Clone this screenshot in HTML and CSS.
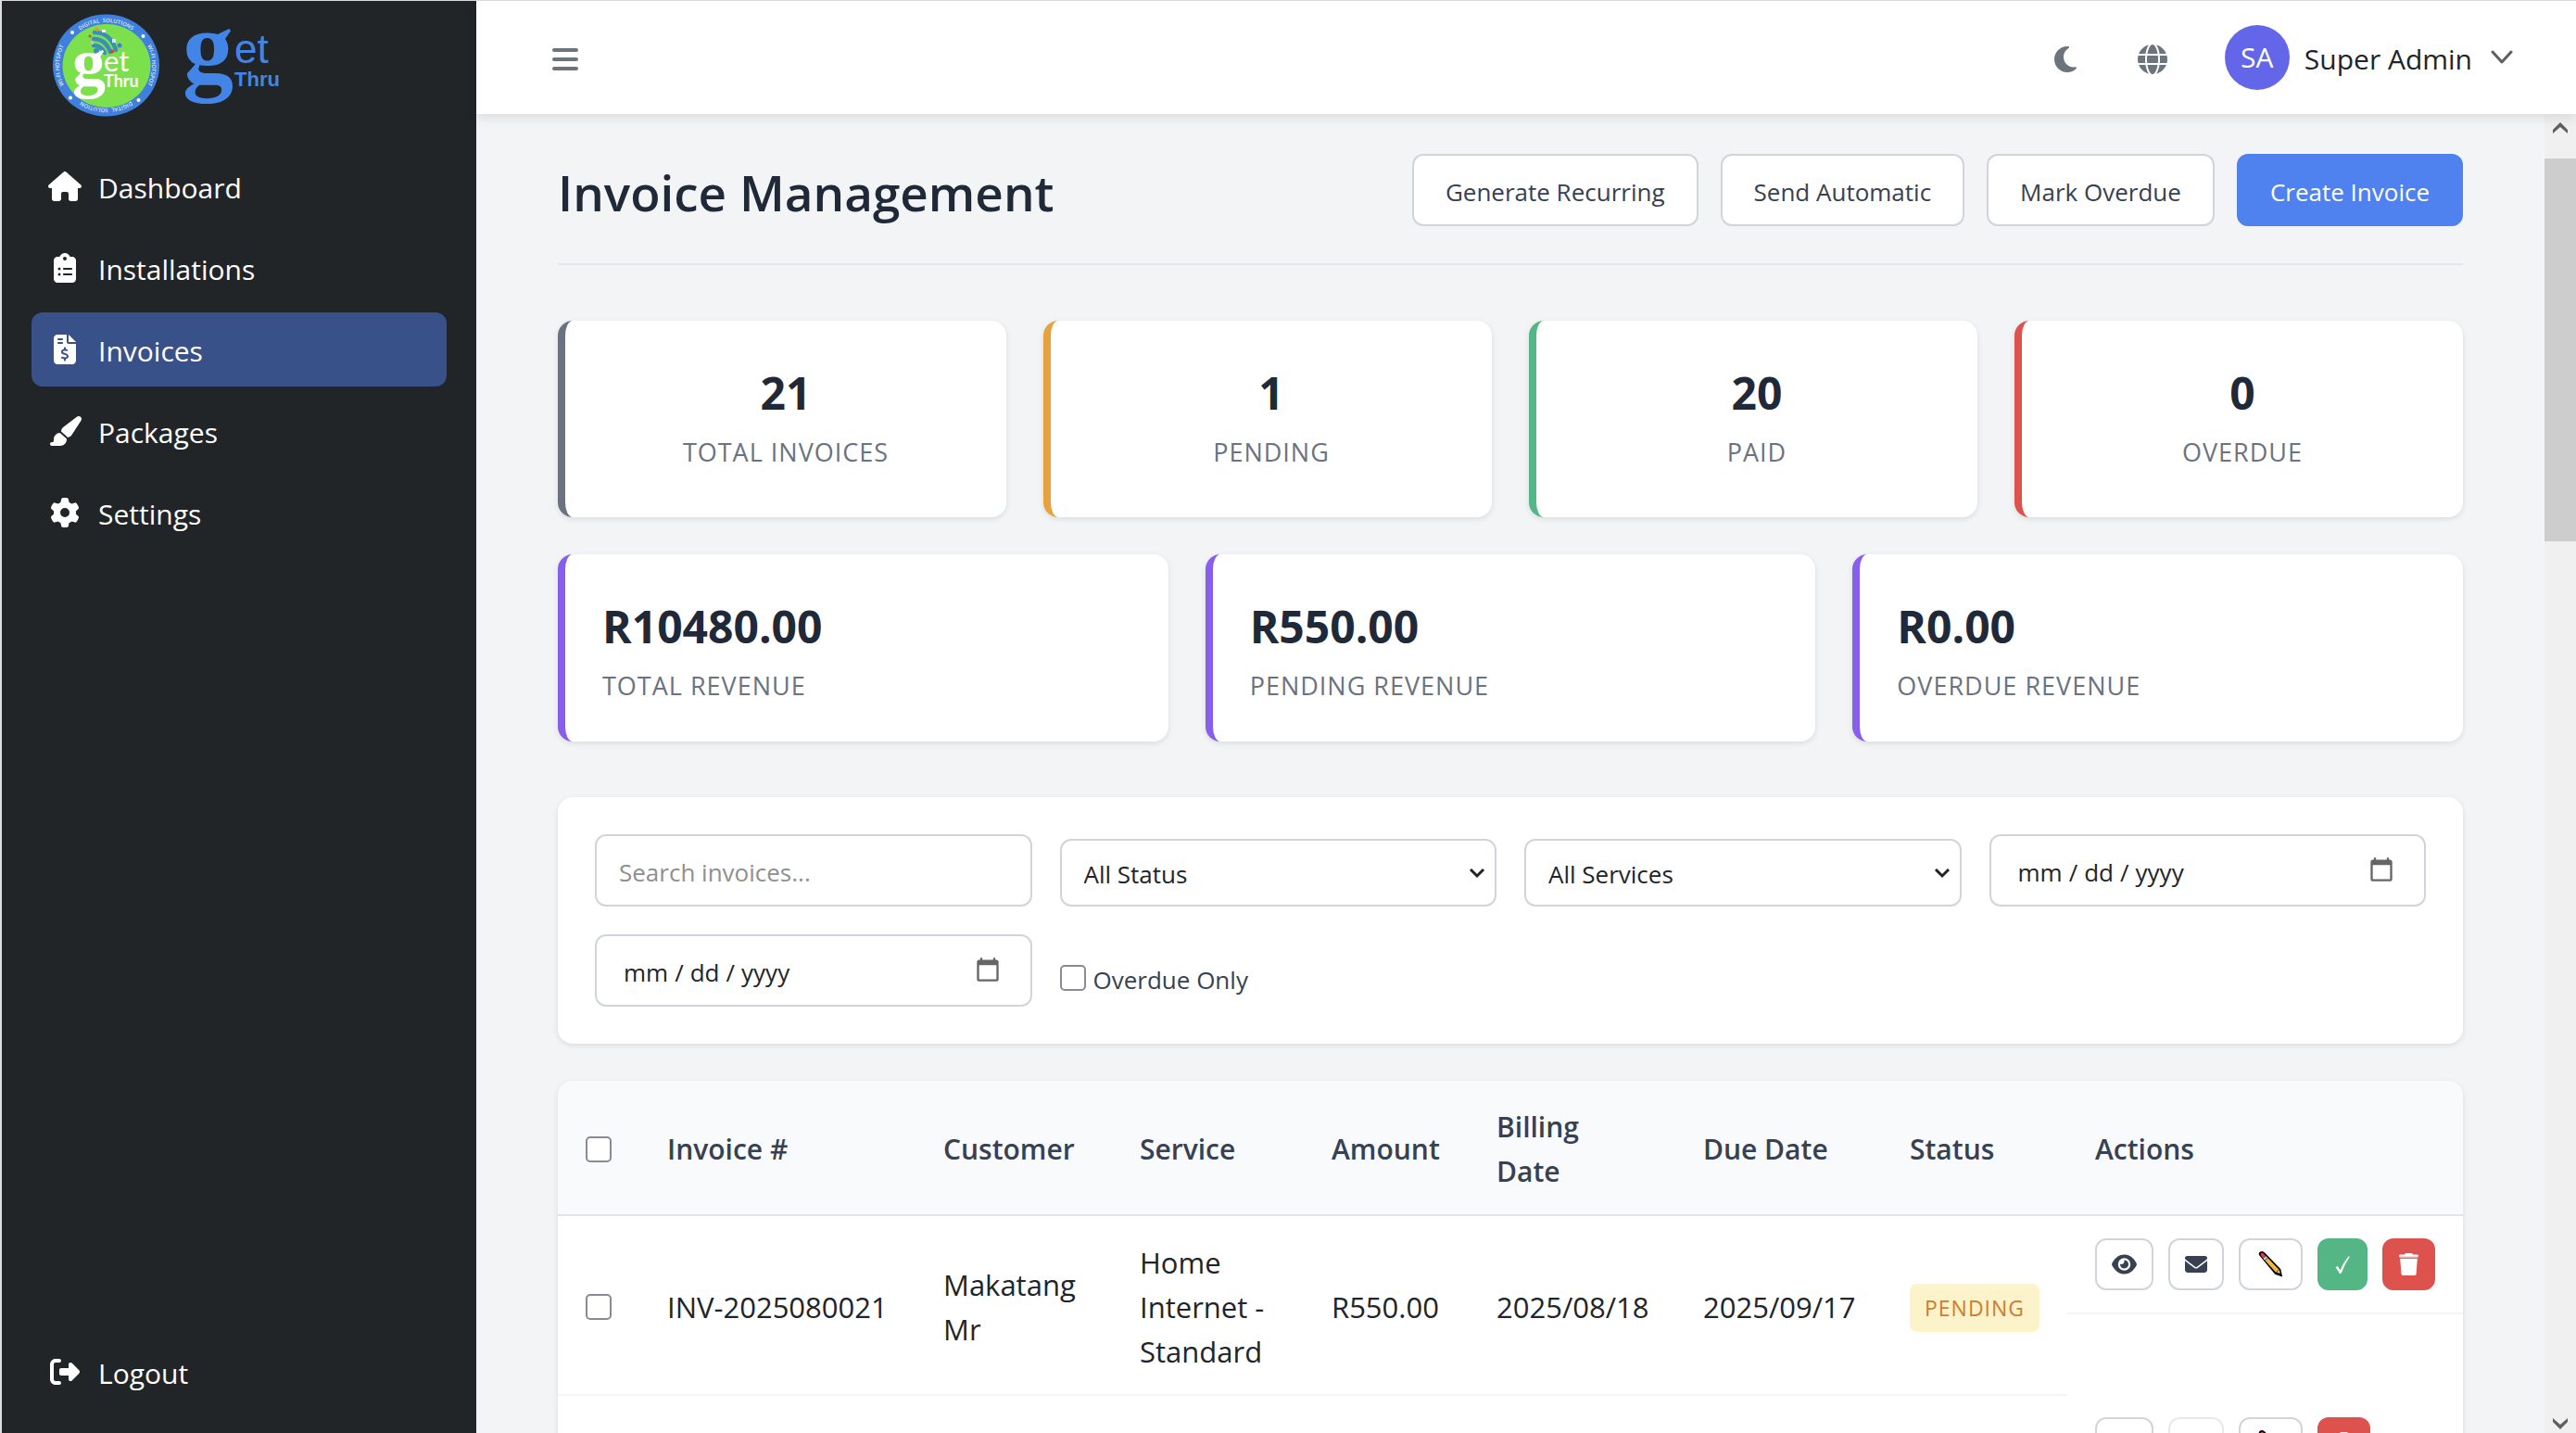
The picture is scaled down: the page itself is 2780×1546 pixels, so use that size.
FILE: index.html
```html
<!DOCTYPE html>
<html lang="en">
<head>
<meta charset="utf-8">
<title>Invoice Management</title>
<link rel="stylesheet" href="styles.css">
</head>
<body>
<svg class="sprite" aria-hidden="true">
  <symbol id="i-house" viewBox="0 0 576 512"><path d="M575.8 255.5c0 18-15 32.1-32 32.1l-32 0 .7 160.2c0 2.7-.2 5.4-.5 8.1l0 16.2c0 22.1-17.9 40-40 40l-16 0c-1.1 0-2.2 0-3.3-.1c-1.4 .1-2.8 .1-4.2 .1L416 512l-24 0c-22.1 0-40-17.9-40-40l0-24 0-64c0-17.7-14.3-32-32-32l-64 0c-17.7 0-32 14.3-32 32l0 64 0 24c0 22.1-17.9 40-40 40l-24 0-31.9 0c-1.5 0-3-.1-4.5-.2c-1.2 .1-2.4 .2-3.6 .2l-16 0c-22.1 0-40-17.9-40-40l0-112c0-.9 0-1.9 .1-2.8l0-69.7-32 0c-18 0-32-14-32-32.1c0-9 3-17 10-24L266.4 8c7-7 15-8 22-8s15 2 21 7L564.8 231.5c8 7 12 15 11 24z"/></symbol>
  <symbol id="i-clipboard" viewBox="0 0 384 512"><path d="M192 0c-41.8 0-77.4 26.7-90.5 64L64 64C28.7 64 0 92.7 0 128L0 448c0 35.3 28.7 64 64 64l256 0c35.3 0 64-28.7 64-64l0-320c0-35.3-28.7-64-64-64l-37.5 0C269.4 26.7 233.8 0 192 0zm0 64a32 32 0 1 1 0 64 32 32 0 1 1 0-64zM72 272a24 24 0 1 1 48 0 24 24 0 1 1 -48 0zm104-16l128 0c8.8 0 16 7.2 16 16s-7.2 16-16 16l-128 0c-8.8 0-16-7.2-16-16s7.2-16 16-16zM72 368a24 24 0 1 1 48 0 24 24 0 1 1 -48 0zm88 0c0-8.8 7.2-16 16-16l128 0c8.8 0 16 7.2 16 16s-7.2 16-16 16l-128 0c-8.8 0-16-7.2-16-16z"/></symbol>
  <symbol id="i-invoice" viewBox="0 0 384 512"><path d="M64 0C28.7 0 0 28.7 0 64L0 448c0 35.3 28.7 64 64 64l256 0c35.3 0 64-28.7 64-64l0-288-128 0c-17.7 0-32-14.3-32-32L224 0 64 0zM256 0l0 128 128 0L256 0zM64 80c0-8.8 7.2-16 16-16l64 0c8.8 0 16 7.2 16 16s-7.2 16-16 16L80 96c-8.8 0-16-7.2-16-16zm0 64c0-8.8 7.2-16 16-16l64 0c8.8 0 16 7.2 16 16s-7.2 16-16 16l-64 0c-8.8 0-16-7.2-16-16zm128 72c8.8 0 16 7.2 16 16l0 17.3c8.5 1.2 16.7 3.1 24.1 5.1c8.5 2.3 13.6 11 11.3 19.6s-11 13.6-19.6 11.3c-11.1-3-22-5.2-32.1-5.3c-8.4-.1-17.4 1.8-23.6 5.5c-5.7 3.4-8.1 7.3-8.1 12.8c0 3.7 1.3 6.5 7.3 10.1c6.9 4.1 16.6 7.1 29.2 10.9l.5 .1c11.3 3.4 25.3 7.6 36.3 14.6c12.1 7.6 22.4 19.7 22.7 38.2c.3 19.3-9.6 33.3-22.9 41.6c-7.7 4.8-16.4 7.6-25.1 9.1l0 17.1c0 8.8-7.2 16-16 16s-16-7.2-16-16l0-17.8c-11.2-2.1-21.7-5.7-30.9-8.9c-2.1-.7-4.2-1.4-6.2-2.1c-8.4-2.8-12.9-11.9-10.1-20.2s11.9-12.9 20.2-10.1c2.5 .8 4.8 1.6 7.1 2.4c13.6 4.6 24.6 8.4 36.3 8.7c9.1 .3 17.9-1.7 23.7-5.3c5.1-3.2 7.9-7.3 7.8-14c-.1-4.6-1.8-7.8-7.7-11.6c-6.8-4.3-16.5-7.4-29-11.2l-1.6-.5c-11-3.3-24.3-7.3-34.8-13.7c-12-7.2-22.6-18.9-22.7-37.3c-.1-19.4 10.8-32.8 23.8-40.5c7.5-4.4 15.8-7.2 24.1-8.7l0-17.3c0-8.8 7.2-16 16-16z"/></symbol>
  <symbol id="i-brush" viewBox="0 0 576 512"><path d="M339.3 367.1c27.3-3.9 51.9-19.4 67.2-42.9L568.2 74.1c12.6-19.5 9.4-45.3-7.6-61.2S517.7-4.4 499.1 9.6L262.4 187.2c-24 18-38.2 46.1-38.4 76.1L339.3 367.1zm-19.6 25.4l-116-104.4C143.9 290.3 96 339.6 96 400c0 3.9 .2 7.8 .6 11.6C98.4 429.1 86.4 448 68.8 448L64 448c-17.7 0-32 14.3-32 32s14.3 32 32 32l144 0c61.9 0 112-50.1 112-112c0-2.5-.1-5-.2-7.5z"/></symbol>
  <symbol id="i-gear" viewBox="0 0 512 512"><path d="M495.9 166.6c3.2 8.7 .5 18.4-6.4 24.6l-43.3 39.4c1.1 8.3 1.7 16.8 1.7 25.4s-.6 17.1-1.7 25.4l43.3 39.4c6.9 6.2 9.6 15.9 6.4 24.6c-4.4 11.9-9.7 23.3-15.8 34.3l-4.7 8.1c-6.6 11-14 21.4-22.1 31.2c-5.9 7.2-15.7 9.6-24.5 6.8l-55.7-17.7c-13.4 10.3-28.2 18.9-44 25.4l-12.5 57.1c-2 9.1-9 16.3-18.2 17.8c-13.8 2.3-28 3.5-42.5 3.5s-28.7-1.2-42.5-3.5c-9.2-1.5-16.2-8.7-18.2-17.8l-12.5-57.1c-15.8-6.5-30.6-15.1-44-25.4L83.1 425.9c-8.8 2.8-18.6 .3-24.5-6.8c-8.1-9.8-15.5-20.2-22.1-31.2l-4.7-8.1c-6.1-11-11.4-22.4-15.8-34.3c-3.2-8.7-.5-18.4 6.4-24.6l43.3-39.4C64.6 273.1 64 264.6 64 256s.6-17.1 1.7-25.4L22.4 191.2c-6.9-6.2-9.6-15.9-6.4-24.6c4.4-11.9 9.7-23.3 15.8-34.3l4.7-8.1c6.6-11 14-21.4 22.1-31.2c5.9-7.2 15.7-9.6 24.5-6.8l55.7 17.7c13.4-10.3 28.2-18.9 44-25.4l12.5-57.1c2-9.1 9-16.3 18.2-17.8C227.3 1.2 241.5 0 256 0s28.7 1.2 42.5 3.5c9.2 1.5 16.2 8.7 18.2 17.8l12.5 57.1c15.8 6.5 30.6 15.1 44 25.4l55.7-17.7c8.8-2.8 18.6-.3 24.5 6.8c8.1 9.8 15.5 20.2 22.1 31.2l4.7 8.1c6.1 11 11.4 22.4 15.8 34.3zM256 336a80 80 0 1 0 0-160 80 80 0 1 0 0 160z"/></symbol>
  <symbol id="i-logout" viewBox="0 0 512 512"><path d="M377.9 105.9L500.7 228.7c7.2 7.2 11.3 17.1 11.3 27.3s-4.1 20.1-11.3 27.3L377.9 406.1c-6.4 6.4-15 9.9-24 9.9c-18.7 0-33.9-15.2-33.9-33.9l0-62.1-128 0c-17.7 0-32-14.3-32-32l0-64c0-17.7 14.3-32 32-32l128 0 0-62.1c0-18.7 15.2-33.9 33.9-33.9c9 0 17.6 3.6 24 9.9zM160 96L96 96c-17.7 0-32 14.3-32 32l0 256c0 17.7 14.3 32 32 32l64 0c17.7 0 32 14.3 32 32s-14.3 32-32 32l-64 0c-53 0-96-43-96-96L0 128C0 75 43 32 96 32l64 0c17.7 0 32 14.3 32 32s-14.3 32-32 32z"/></symbol>
  <symbol id="i-bars" viewBox="0 0 28 32"><path d="M2 4h24a2 2 0 0 1 0 4H2a2 2 0 0 1 0-4zm0 10h24a2 2 0 0 1 0 4H2a2 2 0 0 1 0-4zm0 10h24a2 2 0 0 1 0 4H2a2 2 0 0 1 0-4z"/></symbol>
  <symbol id="i-moon" viewBox="0 0 384 512"><path d="M223.5 32C100 32 0 132.3 0 256S100 480 223.5 480c60.6 0 115.5-24.2 155.8-63.4c5-4.9 6.3-12.5 3.1-18.7s-10.1-9.7-17-8.5c-9.8 1.7-19.8 2.6-30.1 2.6c-96.9 0-175.5-78.8-175.5-176c0-65.8 36-123.1 89.3-153.3c6.1-3.5 9.2-10.5 7.7-17.3s-7.3-11.9-14.3-12.5c-6.3-.5-12.6-.8-19-.8z"/></symbol>
  <symbol id="i-globe" viewBox="0 0 512 512"><path d="M352 256c0 22.2-1.2 43.6-3.3 64l-185.3 0c-2.2-20.4-3.3-41.8-3.3-64s1.2-43.6 3.3-64l185.3 0c2.2 20.4 3.3 41.8 3.3 64zm28.8-64l123.1 0c5.3 20.5 8.1 41.9 8.1 64s-2.8 43.5-8.1 64l-123.1 0c2.1-20.6 3.2-42 3.2-64s-1.1-43.4-3.2-64zm112.6-32l-116.7 0c-10-63.9-29.8-117.4-55.3-151.6c78.3 20.7 142 77.5 171.9 151.6zm-149.1 0l-176.6 0c6.1-36.4 15.5-68.6 27-94.7c10.5-23.6 22.2-40.7 33.5-51.5C239.4 3.2 248.7 0 256 0s16.6 3.2 27.8 13.8c11.3 10.8 23 27.9 33.5 51.5c11.6 26 20.9 58.2 27 94.7zm-209 0L18.6 160C48.6 85.9 112.2 29.1 190.6 8.4C165.1 42.6 145.3 96.1 135.3 160zM8.1 192l123.1 0c-2.1 20.6-3.2 42-3.2 64s1.1 43.4 3.2 64L8.1 320C2.8 299.5 0 278.1 0 256s2.8-43.5 8.1-64zM194.7 446.6c-11.6-26-20.9-58.2-27-94.6l176.6 0c-6.1 36.4-15.5 68.6-27 94.6c-10.5 23.6-22.2 40.7-33.5 51.5C272.6 508.8 263.3 512 256 512s-16.6-3.2-27.8-13.8c-11.3-10.8-23-27.9-33.5-51.5zM135.3 352c10 63.9 29.8 117.4 55.3 151.6C112.2 482.9 48.6 426.1 18.6 352l116.7 0zm358.1 0c-30 74.1-93.6 130.9-171.9 151.6c25.5-34.2 45.2-87.7 55.3-151.6l116.7 0z"/></symbol>
  <symbol id="i-eye" viewBox="0 0 576 512"><path d="M288 32c-80.8 0-145.5 36.8-192.6 80.6C48.6 156 17.3 208 2.5 243.7c-3.3 7.9-3.3 16.7 0 24.6C17.3 304 48.6 356 95.4 399.4C142.5 443.2 207.2 480 288 480s145.5-36.8 192.6-80.6c46.8-43.5 78.1-95.4 93-131.1c3.3-7.9 3.3-16.7 0-24.6c-14.9-35.7-46.2-87.7-93-131.1C433.5 68.8 368.8 32 288 32zM144 256a144 144 0 1 1 288 0 144 144 0 1 1 -288 0zm144-64c0 35.3-28.7 64-64 64c-7.1 0-13.9-1.2-20.3-3.3c-5.5-1.8-11.9 1.6-11.7 7.4c.3 6.9 1.3 13.8 3.2 20.7c13.7 51.2 66.4 81.6 117.6 67.9s81.6-66.4 67.9-117.6c-11.1-41.5-47.8-69.4-88.6-71.1c-5.8-.2-9.2 6.1-7.4 11.7c2.1 6.4 3.3 13.2 3.3 20.3z"/></symbol>
  <symbol id="i-mail" viewBox="0 0 512 512"><path d="M48 64C21.5 64 0 85.5 0 112c0 15.1 7.1 29.3 19.2 38.4L236.8 313.6c11.4 8.5 27 8.5 38.4 0L492.8 150.4c12.1-9.1 19.2-23.3 19.2-38.4c0-26.5-21.5-48-48-48L48 64zM0 176L0 384c0 35.3 28.7 64 64 64l384 0c35.3 0 64-28.7 64-64l0-208L294.4 339.2c-22.8 17.1-54 17.1-76.8 0L0 176z"/></symbol>
  <symbol id="i-pencil" viewBox="0 0 32 32">
    <path d="M3.500 6.500Q1 3 4 1.500Q7 0 9.500 3L27.500 21.500L29.500 30.500L21 27.500Z" fill="#000"/>
    <path d="M5 6Q3.500 4 5 3.200Q6.800 2.500 8.500 4.500L10 6L7 9Z" fill="#d9405a"/>
    <path d="M10.400 6.400L12.400 8.400L9.200 11.400L7.200 9.400Z" fill="#c9c9c9"/>
    <path d="M12.800 8.800L25.500 22L22 25.200L9.600 11.800Z" fill="#f5b73c"/>
    <path d="M25.800 22.500L27 26.500L23 25.600Z" fill="#e8cdb0"/>
  </symbol>
  <symbol id="i-check" viewBox="0 0 18 24"><path d="M1.500 15.500L3.500 13.800Q5.300 16 6.500 18.600Q9.500 10.500 15.600 3.200L16.800 4.100Q11.500 11.500 7.800 21.500L6 22.200Q4.300 18.500 1.500 15.500Z"/></symbol>
  <symbol id="i-trash" viewBox="0 0 448 512"><path d="M135 18L128 32H24Q0 34 0 60V80H448V60Q448 34 424 32H320L313 18Q307 0 284 0H164Q141 0 135 18Z"/><path opacity=".55" d="M14 80H434V112H14Z"/><path d="M26 128H422L396 482Q393 512 362 512H86Q55 512 52 482Z"/></symbol>
  <symbol id="i-chevron" viewBox="0 0 24 16"><path d="M2 2L12 13L22 2" fill="none" stroke="currentColor" stroke-width="3" stroke-linecap="round" stroke-linejoin="round"/></symbol>
  <symbol id="i-arrow" viewBox="0 0 18 16"><path d="M1 13V9L9 1L17 9V13L9 6Z"/></symbol>
</svg>

<div class="app">
  <aside class="sidebar">
    <a class="brand" href="#" aria-label="getThru home">
      <svg class="brand-logo" viewBox="52 12 252 116">
        <defs>
          <path id="ring-top" d="M66 70.500a48.500 46.500 0 0 1 97 0"/>
          <path id="ring-right" d="M114 22.500a49 47 0 0 1 0 96"/>
          <path id="ring-bottom" d="M163 70.500a48.500 46.500 0 0 1 -97 0"/>
          <path id="ring-left" d="M114 118.500a49 47 0 0 1 0 -96"/>
        </defs>
        <ellipse cx="114.500" cy="70.500" rx="57.500" ry="55" fill="#3f80df"/>
        <ellipse cx="115" cy="71" rx="47.500" ry="45" fill="#7be04b"/>
        <g class="ring-text">
          <text><textPath href="#ring-top" startOffset="50%">DIGITAL&#160;&#160;SOLUTIONS</textPath></text>
          <text><textPath href="#ring-right" startOffset="50%">WI-FI HOTSPOT</textPath></text>
          <text><textPath href="#ring-bottom" startOffset="50%">DIGITAL&#160;&#160;SOLUTION</textPath></text>
          <text><textPath href="#ring-left" startOffset="50%">WI-FI HOTSPOT</textPath></text>
        </g>
        <g fill="#fff"><circle cx="78" cy="35" r="2"/><circle cx="154.500" cy="39" r="2"/><circle cx="76" cy="105.500" r="2"/><circle cx="149.500" cy="108" r="2"/></g>
        <g fill="none" stroke="#3a8fb8" stroke-width="4.500" stroke-linecap="round">
          <path d="M102 35q17 0 23 19"/><path d="M101 42q13 0 18 14"/><path d="M101 49q8 0 12 8"/>
        </g>
        <circle cx="104" cy="55" r="3" fill="#3a8fb8"/><circle cx="129" cy="49" r="2.500" fill="#3f80df"/>
        <circle cx="104.500" cy="32" r="2" fill="#f08a3c"/><circle cx="121" cy="55.500" r="2" fill="#d93b3b"/><circle cx="97" cy="39" r="1.500" fill="#c04a3a"/>
        <rect x="110" y="32" width="4" height="3" fill="#fff"/><rect x="121" y="42" width="4" height="4" fill="#dfe8dc"/><rect x="98" y="44" width="3" height="4" fill="#b8c8b0"/>
        <g fill="#fff">
          <text class="logo-g" x="78" y="92" font-size="72">g</text>
          <text class="logo-et" x="112" y="77" font-size="31">et</text>
          <text class="logo-thru" x="112" y="94" font-size="18">Thru</text>
        </g>
        <g fill="#4385e6">
          <text class="logo-g" x="197" y="88" font-size="110">g</text>
          <text class="logo-word" x="253" y="68" font-size="44">et</text>
          <text class="logo-word logo-bold" x="253" y="93" font-size="22">Thru</text>
        </g>
      </svg>
    </a>
    <nav class="nav">
      <a class="nav-link" href="#"><svg class="nav-icon"><use href="#i-house"/></svg><span class="label">Dashboard</span></a>
      <a class="nav-link" href="#"><svg class="nav-icon"><use href="#i-clipboard"/></svg><span class="label">Installations</span></a>
      <a class="nav-link active" href="#" aria-current="page"><svg class="nav-icon"><use href="#i-invoice"/></svg><span class="label">Invoices</span></a>
      <a class="nav-link" href="#"><svg class="nav-icon"><use href="#i-brush"/></svg><span class="label">Packages</span></a>
      <a class="nav-link" href="#"><svg class="nav-icon"><use href="#i-gear"/></svg><span class="label">Settings</span></a>
      <a class="nav-link logout" href="#"><svg class="nav-icon"><use href="#i-logout"/></svg><span class="label">Logout</span></a>
    </nav>
  </aside>

  <div class="shell">
    <header class="topbar">
      <button class="icon-button" type="button" aria-label="Toggle menu"><svg class="icon-bars"><use href="#i-bars"/></svg></button>
      <div class="topbar-tools">
        <button class="icon-button" type="button" aria-label="Dark mode"><svg class="icon-tool"><use href="#i-moon"/></svg></button>
        <button class="icon-button" type="button" aria-label="Language"><svg class="icon-tool"><use href="#i-globe"/></svg></button>
        <button class="user" type="button"><span class="avatar">SA</span><span class="label">Super Admin</span><svg class="user-chevron"><use href="#i-chevron"/></svg></button>
      </div>
    </header>

    <div class="viewport">
      <main class="content">
        <div class="page-head">
          <h1>Invoice Management</h1>
          <div class="page-actions">
            <button class="btn" type="button">Generate Recurring</button>
            <button class="btn" type="button">Send Automatic</button>
            <button class="btn" type="button">Mark Overdue</button>
            <button class="btn primary" type="button">Create Invoice</button>
          </div>
        </div>

        <section class="stats" aria-label="Invoice counts">
          <div class="card stat total"><div class="figure">21</div><div class="caption">Total Invoices</div></div>
          <div class="card stat pending"><div class="figure">1</div><div class="caption">Pending</div></div>
          <div class="card stat paid"><div class="figure">20</div><div class="caption">Paid</div></div>
          <div class="card stat overdue"><div class="figure">0</div><div class="caption">Overdue</div></div>
        </section>

        <section class="revenue" aria-label="Revenue">
          <div class="card sum"><div class="figure">R10480.00</div><div class="caption">Total Revenue</div></div>
          <div class="card sum"><div class="figure">R550.00</div><div class="caption">Pending Revenue</div></div>
          <div class="card sum"><div class="figure">R0.00</div><div class="caption">Overdue Revenue</div></div>
        </section>

        <form class="card filters">
          <input class="field" type="text" placeholder="Search invoices..." aria-label="Search invoices">
          <select class="field select" aria-label="Status"><option>All Status</option></select>
          <select class="field select" aria-label="Service"><option>All Services</option></select>
          <input class="field" type="date" aria-label="From date">
          <input class="field" type="date" aria-label="To date">
          <label class="check-label"><input class="check" type="checkbox"><span class="label">Overdue Only</span></label>
        </form>

        <div class="card table-card">
          <table class="invoices">
            <colgroup><col class="c-check"><col class="c-invoice"><col class="c-customer"><col class="c-service"><col class="c-amount"><col class="c-date"><col class="c-date"><col class="c-status"><col class="c-actions"></colgroup>
            <thead>
              <tr><th><input class="check" type="checkbox" aria-label="Select all invoices"></th><th>Invoice #</th><th>Customer</th><th>Service</th><th>Amount</th><th>Billing Date</th><th>Due Date</th><th>Status</th><th>Actions</th></tr>
            </thead>
            <tbody>
              <tr>
                <td><input class="check" type="checkbox" aria-label="Select INV-2025080021"></td>
                <td>INV-2025080021</td><td>Makatang Mr</td><td>Home Internet - Standard</td><td>R550.00</td><td>2025/08/18</td><td>2025/09/17</td>
                <td><span class="badge">Pending</span></td>
                <td class="actions-cell"><div class="actions">
                  <button class="act" type="button" aria-label="View"><svg class="act-eye"><use href="#i-eye"/></svg></button>
                  <button class="act" type="button" aria-label="Email"><svg class="act-mail"><use href="#i-mail"/></svg></button>
                  <button class="act" type="button" aria-label="Edit"><svg class="act-pencil"><use href="#i-pencil"/></svg></button>
                  <button class="act success" type="button" aria-label="Mark paid"><svg class="act-check"><use href="#i-check"/></svg></button>
                  <button class="act danger" type="button" aria-label="Delete"><svg class="act-trash"><use href="#i-trash"/></svg></button>
                </div></td>
              </tr>
              <tr>
                <td><input class="check" type="checkbox" aria-label="Select invoice"></td>
                <td></td><td></td><td>Home Internet - Standard</td><td></td><td></td><td></td><td></td>
                <td class="actions-cell"><div class="actions">
                  <button class="act" type="button" aria-label="View"><svg class="act-eye"><use href="#i-eye"/></svg></button>
                  <button class="act" type="button" aria-label="Email" disabled><svg class="act-mail"><use href="#i-mail"/></svg></button>
                  <button class="act" type="button" aria-label="Edit"><svg class="act-pencil"><use href="#i-pencil"/></svg></button>
                  <button class="act danger" type="button" aria-label="Delete"><svg class="act-trash"><use href="#i-trash"/></svg></button>
                </div></td>
              </tr>
            </tbody>
          </table>
        </div>
      </main>
      <div class="scrollbar" aria-hidden="true">
        <svg class="scroll-arrow"><use href="#i-arrow"/></svg>
        <div class="scroll-thumb"></div>
        <svg class="scroll-arrow down"><use href="#i-arrow"/></svg>
      </div>
    </div>
  </div>
</div>
</body>
</html>
```
FILE: styles.css
```css
* { box-sizing: border-box; }

body {
  margin: 0;
  background: #f3f4f6;
  color: #212529;
  font-family: "Open Sans", "Noto Sans", sans-serif;
  font-size: 30px;
  line-height: 48px;
}

button, input, select { font: inherit; color: inherit; }
button { cursor: pointer; }
svg { display: block; fill: currentColor; }
.sprite { position: absolute; width: 0; height: 0; }
.label { padding-top: 4px; }

.app {
  display: flex;
  height: 100vh;
  overflow: hidden;
  border-top: 1px solid #d9dadb;
  border-left: 2px solid #dcdddd;
}

/* Sidebar */
.sidebar {
  display: flex;
  flex-direction: column;
  flex: none;
  width: 512px;
  background: #212528;
  color: #fff;
}
.brand { display: block; padding: 11px 50px 33px; }
.brand-logo { width: 252px; height: 116px; }
.ring-text text {
  font: 600 6px "Open Sans", sans-serif;
  fill: #dce8fb;
  text-anchor: middle;
}
.logo-g { font-family: "Liberation Serif", serif; font-weight: 700; }
.logo-et { font-family: Lato, sans-serif; }
.logo-thru { font-family: Lato, sans-serif; font-weight: 700; }
.logo-word { font-family: "Liberation Sans", sans-serif; }
.logo-bold { font-weight: 700; }

.nav {
  display: flex;
  flex: 1;
  flex-direction: column;
  gap: 8px;
  padding: 0 32px 26px;
}
.nav-link {
  display: flex;
  align-items: center;
  gap: 18px;
  height: 80px;
  padding: 0 18px;
  border-radius: 12px;
  color: #fff;
  text-decoration: none;
}
.nav-link.active { background: #385289; }
.nav-icon { width: 36px; height: 32px; }
.logout { margin-top: auto; }

/* Top bar */
.shell { display: flex; flex: 1; flex-direction: column; min-width: 0; }
.topbar {
  display: flex;
  flex: none;
  align-items: center;
  justify-content: space-between;
  position: relative;
  z-index: 1;
  height: 122px;
  padding: 0 68px 0 82px;
  background: #fff;
  box-shadow: 0 4px 12px rgba(0, 0, 0, .1);
}
.topbar-tools { display: flex; align-items: center; gap: 62px; }
.icon-button {
  padding: 4px 0 0;
  border: 0;
  background: none;
  color: #6c757d;
}
.icon-bars { width: 28px; height: 32px; }
.icon-tool { width: 32px; height: 32px; }
.user {
  display: flex;
  align-items: center;
  gap: 16px;
  padding: 0;
  border: 0;
  background: none;
}
.avatar {
  width: 70px;
  height: 70px;
  border-radius: 50%;
  background: #6366e8;
  color: #fff;
  line-height: 70px;
  text-align: center;
}
.user-chevron { width: 24px; height: 16px; margin-left: 4px; color: #5c5f63; }

/* Page */
.viewport { display: flex; flex: 1; min-height: 0; }
.content {
  flex: 1;
  min-width: 0;
  padding: 43px 88px 0;
  overflow: hidden;
}
.page-head {
  display: flex;
  align-items: center;
  justify-content: space-between;
  margin-bottom: 60px;
  padding-bottom: 40px;
  border-bottom: 2px solid #e5e7eb;
}
h1 {
  margin: 0;
  padding-top: 6px;
  color: #1f2937;
  font-size: 53px;
  font-weight: 600;
  line-height: 72px;
}
.page-actions { display: flex; gap: 24px; }
.btn {
  height: 78px;
  padding: 3px 34px 0;
  border: 2px solid #d1d5db;
  border-radius: 12px;
  background: #fff;
  color: #374151;
  font-size: 26px;
}
.btn.primary { border-color: #4f82ee; background: #4f82ee; color: #fff; }

/* Cards */
.card {
  border-radius: 16px;
  background: #fff;
  box-shadow: 0 2px 6px rgba(0, 0, 0, .1);
}
.stats {
  display: grid;
  grid-template-columns: repeat(4, 1fr);
  gap: 40px;
  margin-bottom: 40px;
}
.revenue {
  display: grid;
  grid-template-columns: repeat(3, 1fr);
  gap: 40px;
  margin-bottom: 60px;
}
.stat { padding: 42px 40px 50px; border-left: 8px solid; text-align: center; }
.sum { padding: 42px 40px 40px; border-left: 8px solid #875fec; }
.total { border-color: #6b7280; }
.pending { border-color: #e6a23c; }
.paid { border-color: #55b685; }
.overdue { border-color: #dd524c; }
.figure {
  margin-bottom: 8px;
  color: #1f2937;
  font-size: 48px;
  font-weight: 700;
  line-height: 72px;
}
.caption {
  color: #6b7280;
  font-size: 27px;
  letter-spacing: 1px;
  line-height: 40px;
  text-transform: uppercase;
}

/* Filters */
.filters {
  display: grid;
  grid-template-columns: repeat(4, 1fr);
  align-items: end;
  gap: 30px;
  margin-bottom: 40px;
  padding: 40px;
  font-size: 26px;
}
.field {
  width: 100%;
  height: 78px;
  padding: 3px 24px 0;
  border: 2px solid #d1d5db;
  border-radius: 12px;
  background: #fff;
}
.field::placeholder { color: #8f8f8f; }
.field::-webkit-datetime-edit { padding: 0 4px; }
.field::-webkit-datetime-edit-text { padding: 0 6px; }
.field::-webkit-calendar-picker-indicator {
  width: 30px;
  height: 30px;
  margin-right: 5px;
  margin-bottom: 4px;
  opacity: .6;
}
.select {
  height: 73px;
  appearance: none;
  background: #fff url("data:image/svg+xml,%3Csvg xmlns='http://www.w3.org/2000/svg' width='18' height='12' viewBox='0 0 18 12'%3E%3Cpath d='M2 2l7 7 7-7' fill='none' stroke='%23222' stroke-width='3'/%3E%3C/svg%3E") no-repeat right 10px center;
}
.check-label {
  display: flex;
  align-items: center;
  gap: 8px;
  height: 62px;
  color: #374151;
}
.check {
  appearance: none;
  display: block;
  width: 28px;
  height: 28px;
  margin: 0;
  border: 2px solid #8a8a96;
  border-radius: 5px;
  background: #fff;
}

/* Table */
.table-card { overflow: hidden; }
.invoices { width: 100%; border-collapse: collapse; table-layout: fixed; }
.c-check { width: 88px; }
.c-invoice { width: 298px; }
.c-customer { width: 212px; }
.c-service { width: 207px; }
.c-amount { width: 178px; }
.c-date { width: 223px; }
.c-status { width: 200px; }
.c-actions { width: 427px; }
th, td { padding: 26px 30px 22px; text-align: left; }
th {
  border-bottom: 2px solid #e2e4e8;
  background: #f9fafb;
  color: #374151;
  font-weight: 600;
}
td { border-bottom: 2px solid #f3f4f6; font-size: 31px; }
td:nth-child(8) { padding-right: 20px; }
td.actions-cell { padding: 0; border: 0; vertical-align: top; }
.badge {
  display: inline-block;
  padding: 0 16px;
  border-radius: 8px;
  background: #fcf3cb;
  color: #cf7d2c;
  font-size: 23px;
  letter-spacing: 1px;
  line-height: 52px;
  text-transform: uppercase;
  vertical-align: middle;
}
.actions {
  display: flex;
  gap: 16px;
  padding: 24px 30px;
  border-bottom: 2px solid #f3f4f6;
}
.act {
  display: flex;
  align-items: center;
  height: 56px;
  padding: 0 16px;
  border: 2px solid #d1d5db;
  border-radius: 12px;
  background: #fff;
  color: #374151;
}
.act:disabled { opacity: .5; }
.act.success { border-color: #55b685; background: #55b685; color: #fff; }
.act.danger { border-color: #dd524c; background: #dd524c; color: #fff; }
.act-eye { width: 27px; height: 24px; }
.act-mail { width: 24px; height: 24px; }
.act-pencil { width: 33px; height: 30px; }
.act-check { width: 18px; height: 24px; }
.act-trash { width: 21px; height: 26px; }

/* Scroll track */
.scrollbar {
  display: flex;
  flex: none;
  flex-direction: column;
  align-items: center;
  width: 34px;
  background: #f0f0f0;
}
.scroll-arrow { width: 18px; height: 16px; margin: 8px 0 24px; color: #5f5f5f; }
.scroll-arrow.down { margin: auto 0 3px; transform: rotate(180deg); }
.scroll-thumb { width: 100%; height: 29%; background: #cdcdcd; }
```
